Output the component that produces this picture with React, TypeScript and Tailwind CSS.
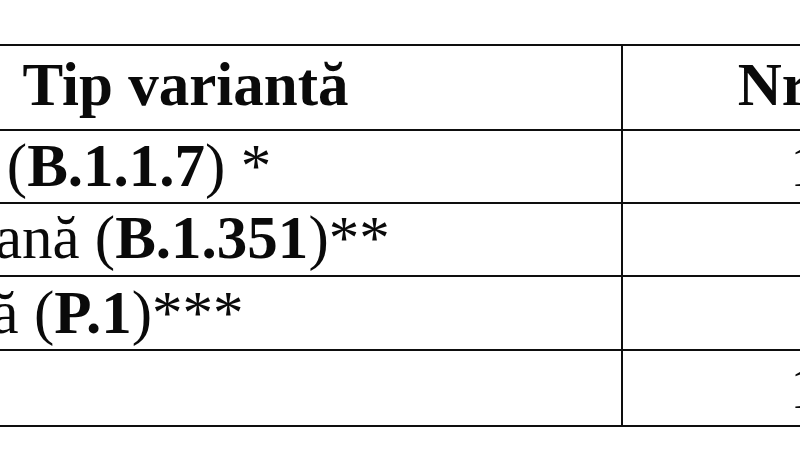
const rows = [
  {
    height: "h-[73px]",
    pad: "pt-[1px]",
    label: (
      <>
        Britanică (<span className="font-bold">B.1.1.7</span>) *
      </>
    ),
    value: "1.653",
  },
  {
    height: "h-[73px]",
    pad: "pt-0",
    label: (
      <>
        Sud-africană (<span className="font-bold">B.1.351</span>)**
      </>
    ),
    value: "85",
  },
  {
    height: "h-[74px]",
    pad: "pt-[2px]",
    label: (
      <>
        Braziliană (<span className="font-bold">P.1</span>)***
      </>
    ),
    value: "12",
  },
  {
    height: "h-[76px]",
    pad: "pt-[3px]",
    label: <span className="font-bold">Total</span>,
    value: "1.750",
  },
];

export default function App() {
  return (
    <div className="h-[450px] w-[800px] overflow-hidden bg-white pt-[44px] font-['Liberation_Serif',serif] text-[61px] leading-[67px] text-[#0a0a0a]">
      <div className="ml-[-240px] w-[1357px] border-t-2 border-[#0e0e0e]">
        <div className="flex h-[85px] border-b-2 border-[#0e0e0e]">
          <div className="w-[863px] border-r-2 border-[#0e0e0e] pr-[10px] pt-[5px] text-center font-bold">
            Tip variantă
          </div>
          <div className="w-[494px] pr-[6px] pt-[5px] text-center font-bold">Nr. cazuri</div>
        </div>
        {rows.map((row, i) => (
          <div key={i} className={`flex border-b-2 border-[#0e0e0e] ${row.height}`}>
            <div className={`w-[863px] whitespace-nowrap border-r-2 border-[#0e0e0e] pl-[8px] ${row.pad}`}>
              {row.label}
            </div>
            <div className={`w-[494px] pr-[23px] text-center ${row.pad}`}>{row.value}</div>
          </div>
        ))}
      </div>
    </div>
  );
}
